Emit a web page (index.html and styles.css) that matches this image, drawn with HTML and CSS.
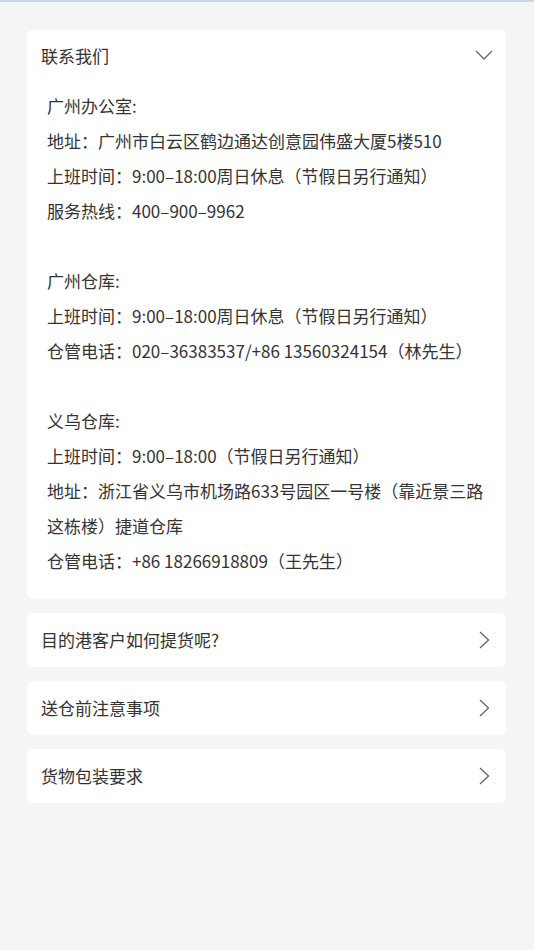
FILE: index.html
```html
<!DOCTYPE html>
<html lang="zh">
<head>
<meta charset="utf-8">
<link rel="stylesheet" href="styles.css">
</head>
<body>
<div class="topline"></div>
<main class="page">
  <section class="card">
    <div class="head">
      <span class="title">联系我们</span>
      <svg class="chev-down" width="18" height="10" viewBox="0 0 18 10"><path d="M1 1 L9 9 L17 1" fill="none" stroke="#666" stroke-width="1.3"/></svg>
    </div>
    <div class="body">
      <p>广州办公室:</p>
      <p>地址：广州市白云区鹤边通达创意园伟盛大厦5楼510</p>
      <p>上班时间：9:00–18:00周日休息（节假日另行通知）</p>
      <p>服务热线：400–900–9962</p>
      <p class="blank"></p>
      <p>广州仓库:</p>
      <p>上班时间：9:00–18:00周日休息（节假日另行通知）</p>
      <p>仓管电话：020–36383537/+86 13560324154（林先生）</p>
      <p class="blank"></p>
      <p>义乌仓库:</p>
      <p>上班时间：9:00–18:00（节假日另行通知）</p>
      <p>地址：浙江省义乌市机场路633号园区一号楼（靠近景三路这栋楼）捷道仓库</p>
      <p>仓管电话：+86 18266918809（王先生）</p>
    </div>
  </section>
  <section class="card row">
    <span class="title">目的港客户如何提货呢?</span>
    <svg class="chev-right" width="11" height="18" viewBox="0 0 11 18"><path d="M1 1 L9.5 9 L1 17" fill="none" stroke="#666" stroke-width="1.3"/></svg>
  </section>
  <section class="card row">
    <span class="title">送仓前注意事项</span>
    <svg class="chev-right" width="11" height="18" viewBox="0 0 11 18"><path d="M1 1 L9.5 9 L1 17" fill="none" stroke="#666" stroke-width="1.3"/></svg>
  </section>
  <section class="card row">
    <span class="title">货物包装要求</span>
    <svg class="chev-right" width="11" height="18" viewBox="0 0 11 18"><path d="M1 1 L9.5 9 L1 17" fill="none" stroke="#666" stroke-width="1.3"/></svg>
  </section>
</main>
</body>
</html>
```
FILE: styles.css
```css
html, body {
  margin: 0;
  padding: 0;
  background: #f5f5f5;
}
body {
  width: 534px;
  min-height: 950px;
  font-family: "Noto Sans CJK SC", "Noto Sans", sans-serif;
  color: #333;
}
.topline {
  height: 2px;
  background: #c9d5ec;
}
.page {
  padding: 28px 28px 0 27px;
  display: flex;
  flex-direction: column;
  gap: 14px;
}
.card {
  background: #fff;
  border-radius: 6px;
}
.head {
  height: 52px;
  display: flex;
  align-items: center;
  justify-content: space-between;
  padding: 0 13px 0 14px;
}
.title {
  font-size: 17px;
  line-height: 24px;
}
.chev-down {
  margin-top: -2px;
}
.body {
  padding: 6px 20px 21px 20px;
}
.body p {
  margin: 0;
  font-size: 17px;
  line-height: 35px;
}
.body p.blank {
  height: 35px;
}
.row {
  height: 54px;
  display: flex;
  align-items: center;
  justify-content: space-between;
  padding: 0 16px 0 14px;
}
```
